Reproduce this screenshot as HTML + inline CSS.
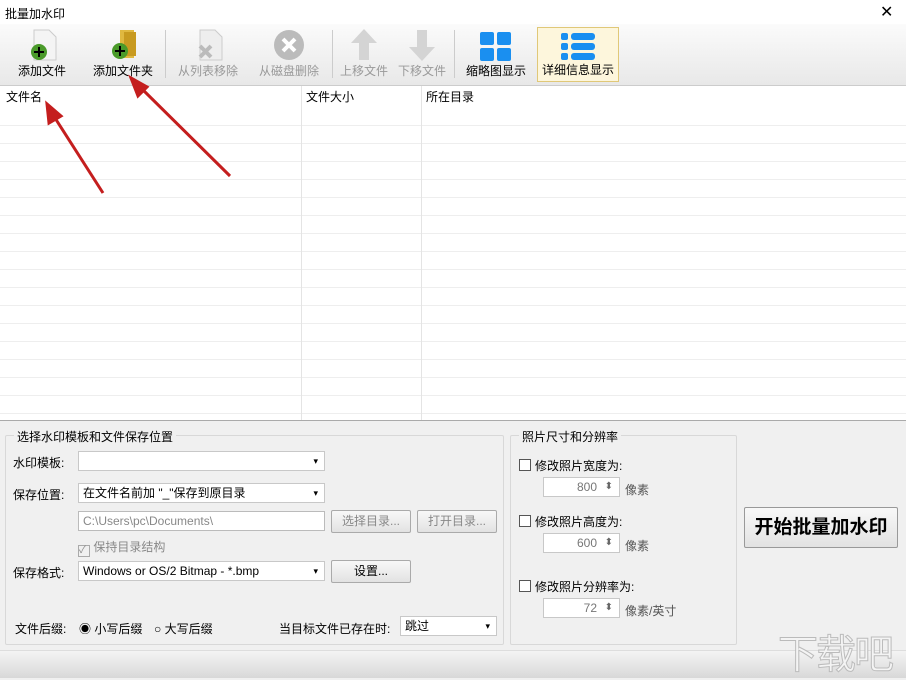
<!DOCTYPE html><html><head><meta charset="utf-8"><style>
*{margin:0;padding:0;box-sizing:border-box}
body{width:906px;height:678px;position:relative;overflow:hidden;background:#f0f0f0;font-family:"Liberation Sans","Noto Sans CJK SC",sans-serif;font-size:12px;color:#000}
.a{position:absolute}
.tb{left:0;top:24px;width:906px;height:62px;background:linear-gradient(#fbfbfb,#e8e8e8);border-bottom:1px solid #ccc}
.btn{position:absolute;top:2px;height:56px;text-align:center;font-size:12px}
.btn span{position:absolute;bottom:3px;left:0;right:0}
.dis{color:#999}
.sep{position:absolute;top:6px;width:1px;height:48px;background:#ccc}
.list{left:0;top:86px;width:906px;height:335px;background:#fff;border-bottom:1px solid #aaa;
background-image:repeating-linear-gradient(to bottom,transparent 0,transparent 17px,#eee 17px,#eee 18px);background-position:0 22px}
.hd{position:absolute;top:0;height:22px;background:#fff;line-height:22px;padding-left:6px;width:100%}
.cl{position:absolute;top:0;bottom:0;width:1px;background:#e4e4e4}
.grp{border:1px solid #d8d8d8;border-radius:2px}
.gt{position:absolute;top:-8px;left:8px;background:#f0f0f0;padding:0 3px}
.cb{background:#fff;border:1px solid #c8c8c8;height:20px;line-height:18px;padding-left:4px}
.dd:after{content:"▾";position:absolute;right:6px;top:0;font-size:9px}
.pb{border:1px solid #aaa;border-radius:2px;background:linear-gradient(#f8f8f8,#e2e2e2);text-align:center;height:23px;line-height:21px}
.chk{width:12px;height:12px;border:1px solid #555;background:#fff}
.sp{background:#fff;border:1px solid #c8c8c8;height:20px;line-height:18px;text-align:right;padding-right:22px;color:#777}
.sp:after{content:"⬍";position:absolute;right:6px;top:0;font-size:10px;color:#666}
</style></head><body>
<div class="a" style="left:0;top:0;width:906px;height:24px;background:#fff;"></div>
<div class="a" style="left:5px;top:5px;font-size:12px">批量加水印</div>
<div class="a" style="left:880px;top:2px;font-size:16px">✕</div>
<div class="a tb">
 <div class="btn" style="left:10px;width:64px">
  <svg class="a" style="left:16px;top:2px" width="34" height="34"><path d="M8 2h15l7 7v23H8z" fill="#f4f4f4" stroke="#ccc"/><circle cx="13" cy="24" r="8" fill="#4a9a2a"/><path d="M13 19v10M8 24h10" stroke="#000" stroke-width="2"/></svg><span>添加文件</span></div>
 <div class="btn" style="left:88px;width:70px">
  <svg class="a" style="left:18px;top:2px" width="34" height="34"><path d="M14 2h14v28H14z" fill="#e0b840"/><path d="M18 4h12v24H18z" fill="#c89a20"/><circle cx="14" cy="23" r="8" fill="#4a9a2a"/><path d="M14 18v10M9 23h10" stroke="#000" stroke-width="2"/></svg><span>添加文件夹</span></div>
 <div class="sep" style="left:165px"></div>
 <div class="btn dis" style="left:172px;width:72px">
  <svg class="a" style="left:20px;top:2px" width="34" height="34"><path d="M8 2h15l7 7v23H8z" fill="#eee" stroke="#ccc"/><path d="M8 18l11 11M19 18L8 29" stroke="#bbb" stroke-width="4"/></svg><span>从列表移除</span></div>
 <div class="btn dis" style="left:252px;width:74px">
  <svg class="a" style="left:20px;top:2px" width="34" height="34"><circle cx="17" cy="17" r="15" fill="#bbb"/><path d="M11 11l12 12M23 11L11 23" stroke="#fff" stroke-width="4"/></svg><span>从磁盘删除</span></div>
 <div class="sep" style="left:332px"></div>
 <div class="btn dis" style="left:336px;width:56px">
  <svg class="a" style="left:13px;top:2px" width="30" height="34"><path d="M15 1L2 15h8v17h10V15h8z" fill="#d4d4d4"/></svg><span>上移文件</span></div>
 <div class="btn dis" style="left:394px;width:56px">
  <svg class="a" style="left:13px;top:2px" width="30" height="34"><path d="M15 33L2 19h8V2h10v17h8z" fill="#d4d4d4"/></svg><span>下移文件</span></div>
 <div class="sep" style="left:454px"></div>
 <div class="btn" style="left:460px;width:72px">
  <svg class="a" style="left:20px;top:6px" width="32" height="30"><rect x="0" y="0" width="14" height="13" rx="2" fill="#1a8ff0"/><rect x="17" y="0" width="14" height="13" rx="2" fill="#1a8ff0"/><rect x="0" y="16" width="14" height="13" rx="2" fill="#1a8ff0"/><rect x="17" y="16" width="14" height="13" rx="2" fill="#1a8ff0"/></svg><span>缩略图显示</span></div>
 <div class="btn" style="left:537px;width:82px;top:3px;height:55px;background:#fdf6dc;border:1px solid #e0c878">
  <svg class="a" style="left:23px;top:5px" width="34" height="28"><g fill="#1a8ff0"><rect x="0" y="0" width="7" height="7" rx="2"/><rect x="10" y="0" width="24" height="7" rx="3"/><rect x="0" y="10" width="7" height="7" rx="2"/><rect x="10" y="10" width="24" height="7" rx="3"/><rect x="0" y="20" width="7" height="7" rx="2"/><rect x="10" y="20" width="24" height="7" rx="3"/></g></svg><span>详细信息显示</span></div>
</div>
<div class="a list">
 <div class="hd">文件名<span class="a" style="left:306px">文件大小</span><span class="a" style="left:426px">所在目录</span></div>
 <div class="cl" style="left:301px"></div><div class="cl" style="left:421px"></div>
</div>
<svg class="a" style="left:0;top:0" width="906" height="678"><g stroke="#c41e1e" stroke-width="3" fill="#c41e1e"><path d="M103 193L55 118"/><path d="M47 104l2 19 12-7z"/><path d="M230 176L140 87"/><path d="M131 78l7 18 9-9z"/></g></svg>
<div class="a grp" style="left:5px;top:435px;width:499px;height:210px"><span class="gt">选择水印模板和文件保存位置</span></div>
<div class="a" style="left:13px;top:454px">水印模板:</div>
<div class="a cb dd" style="left:78px;top:451px;width:247px"></div>
<div class="a" style="left:13px;top:486px">保存位置:</div>
<div class="a cb dd" style="left:78px;top:483px;width:247px">在文件名前加 "_"保存到原目录</div>
<div class="a cb" style="left:78px;top:511px;width:247px;color:#888;border-color:#bbb">C:\Users\pc\Documents\</div>
<div class="a pb" style="left:331px;top:510px;width:80px;color:#888">选择目录...</div>
<div class="a pb" style="left:417px;top:510px;width:80px;color:#888">打开目录...</div>
<div class="a" style="left:78px;top:538px;color:#888"><span style="display:inline-block;width:12px;height:12px;border:1px solid #aaa;font-size:10px;line-height:10px;vertical-align:-2px">✓</span> 保持目录结构</div>
<div class="a" style="left:13px;top:564px">保存格式:</div>
<div class="a cb dd" style="left:78px;top:561px;width:247px">Windows or OS/2 Bitmap - *.bmp</div>
<div class="a pb" style="left:331px;top:560px;width:80px">设置...</div>
<div class="a" style="left:15px;top:620px">文件后缀:</div>
<div class="a" style="left:79px;top:620px">◉ 小写后缀</div>
<div class="a" style="left:154px;top:620px">○ 大写后缀</div>
<div class="a" style="left:279px;top:620px">当目标文件已存在时:</div>
<div class="a cb dd" style="left:400px;top:616px;width:97px">跳过</div>
<div class="a grp" style="left:510px;top:435px;width:227px;height:210px"><span class="gt">照片尺寸和分辨率</span></div>
<div class="a chk" style="left:519px;top:459px"></div><div class="a" style="left:535px;top:457px">修改照片宽度为:</div>
<div class="a sp" style="left:543px;top:477px;width:77px">800</div><div class="a" style="left:625px;top:481px;color:#555">像素</div>
<div class="a chk" style="left:519px;top:515px"></div><div class="a" style="left:535px;top:513px">修改照片高度为:</div>
<div class="a sp" style="left:543px;top:533px;width:77px">600</div><div class="a" style="left:625px;top:537px;color:#555">像素</div>
<div class="a chk" style="left:519px;top:580px"></div><div class="a" style="left:535px;top:578px">修改照片分辨率为:</div>
<div class="a sp" style="left:543px;top:598px;width:77px">72</div><div class="a" style="left:625px;top:602px;color:#555">像素/英寸</div>
<div class="a pb" style="left:744px;top:507px;width:154px;height:41px;line-height:39px;font-size:19px;font-weight:bold;border-color:#999">开始批量加水印</div>
<div class="a" style="left:0;top:650px;width:906px;height:28px;background:linear-gradient(#f4f4f4,#d8d8d8);border-top:1px solid #ddd"></div>
<div class="a" style="left:778px;top:622px;font-size:40px;color:#f4f4f4;-webkit-text-stroke:1px #bbb;letter-spacing:-2px">下载吧</div>
</body></html>
